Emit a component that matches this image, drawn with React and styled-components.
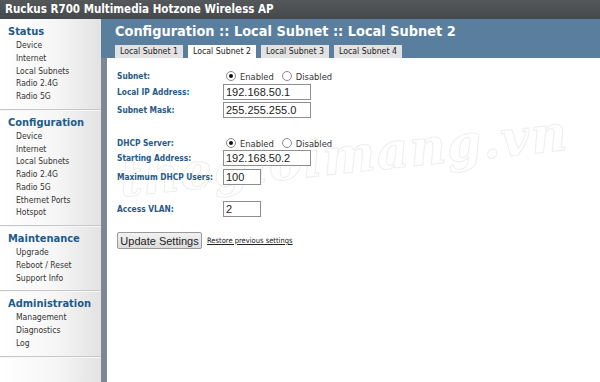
import React from "react";
import styled, { createGlobalStyle } from "styled-components";

const Global = createGlobalStyle`
  html, body { margin: 0; padding: 0; background: #fff; }
  #root { height: 382px; }
`;

const Page = styled.div`
  width: 600px;
  height: 382px;
  display: flex;
  flex-direction: column;
  font-family: "DejaVu Sans Condensed", "DejaVu Sans", Verdana, sans-serif;
  overflow: hidden;
  position: relative;
`;

const TopBar = styled.div`
  height: 19px;
  background: linear-gradient(#55585a, #46494b);
  color: #fff;
  font-weight: bold;
  font-size: 11.5px;
  line-height: 19px;
  padding-left: 5px;
  white-space: nowrap;
`;

const Body = styled.div`
  flex: 1;
  display: flex;
`;

const Sidebar = styled.div`
  width: 101px;
  background: linear-gradient(to right, #ffffff 0%, #f6f6f6 55%, #e2e2e2 100%);
  padding-top: 6px;
`;

const Section = styled.div`
  border-bottom: 1px solid #c8c8c8;
  box-shadow: 0 1px 0 #f6f6f6;
  padding: 0 0 6px 0;
  margin-bottom: 6px;
`;

const SectionTitle = styled.div`
  font-weight: bold;
  font-size: 11px;
  color: #1d5b8a;
  padding-left: 8px;
  line-height: 14px;
`;

const NavItem = styled.div`
  font-size: 8.5px;
  color: #333;
  padding-left: 16px;
  line-height: 12.75px;
`;

const Main = styled.div`
  flex: 1;
  display: flex;
  flex-direction: column;
`;

const Header = styled.div`
  background: #5a7e9d;
  height: 39px;
  padding-left: 14px;
  display: flex;
  flex-direction: column;
  justify-content: flex-end;
`;

const Title = styled.div`
  font-weight: bold;
  font-size: 14.4px;
  color: #fff;
  line-height: 20px;
  margin-bottom: 4px;
  white-space: nowrap;
`;

const Tabs = styled.div`
  display: flex;
  gap: 5px;
`;

const Tab = styled.div`
  width: 68px;
  height: 13px;
  background: ${({ active }) => (active ? "#fff" : "#e2e2e2")};
  font-size: 8.7px;
  line-height: 13px;
  color: #222;
  text-align: center;
  white-space: nowrap;
`;

const Content = styled.div`
  flex: 1;
  border-left: 6px solid #7c8995;
  padding: 11px 0 0 10px;
  position: relative;
  z-index: 1;
`;

const Row = styled.div`
  display: flex;
  align-items: center;
  height: ${({ h }) => h || 16}px;
  margin-top: ${({ gap }) => gap || 0}px;
`;

const Label = styled.div`
  width: 106px;
  font-weight: bold;
  font-size: 8.3px;
  color: #285a86;
`;

const TextInput = styled.input`
  width: ${({ w }) => w || 88}px;
  height: 16px;
  box-sizing: border-box;
  border: 1px solid #8e8e8e;
  padding: 0 2px;
  font-family: "Liberation Sans", Arial, sans-serif;
  font-size: 11px;
  color: #222;
  margin: 0;
  background: #fff;
`;

const RadioGroup = styled.label`
  display: flex;
  align-items: center;
  font-size: 9.3px;
  color: #333;
  margin-left: ${({ first }) => (first ? 3 : 8)}px;
`;

const Radio = styled.input`
  appearance: none;
  width: 10px;
  height: 10px;
  margin: 0 4px 0 0;
  border: 1px solid #8a8a8a;
  border-radius: 50%;
  background: #fff;
  box-sizing: border-box;
  position: relative;
  &:checked::after {
    content: "";
    position: absolute;
    left: 2px;
    top: 2px;
    width: 4px;
    height: 4px;
    border-radius: 50%;
    background: #111;
  }
`;

const Actions = styled.div`
  display: flex;
  align-items: center;
  gap: 5px;
  margin-top: 15px;
`;

const Button = styled.button`
  width: 85px;
  height: 17px;
  padding: 0;
  border: 1px solid #9a9a9a;
  border-radius: 2px;
  background: linear-gradient(#f2f2f2, #dcdcdc);
  font-family: "Liberation Sans", Arial, sans-serif;
  font-size: 11px;
  color: #222;
`;

const RestoreLink = styled.a`
  font-size: 7.5px;
  color: #222;
  text-decoration: underline;
`;

const Watermark = styled.div`
  position: absolute;
  left: 116px;
  top: 150px;
  font-family: "DejaVu Serif", "Liberation Serif", serif;
  font-style: italic;
  font-weight: bold;
  font-size: 50px;
  letter-spacing: 1px;
  color: transparent;
  -webkit-text-stroke: 1px #eeeeee;
  transform: rotate(-6deg);
  transform-origin: left top;
  pointer-events: none;
  white-space: nowrap;
  z-index: 0;
`;

const nav = [
  { title: "Status", items: ["Device", "Internet", "Local Subnets", "Radio 2.4G", "Radio 5G"] },
  {
    title: "Configuration",
    items: ["Device", "Internet", "Local Subnets", "Radio 2.4G", "Radio 5G", "Ethernet Ports", "Hotspot"],
  },
  { title: "Maintenance", items: ["Upgrade", "Reboot / Reset", "Support Info"] },
  { title: "Administration", items: ["Management", "Diagnostics", "Log"] },
];

const RadioPair = ({ name }) => (
  <>
    <RadioGroup first>
      <Radio type="radio" name={name} defaultChecked />
      Enabled
    </RadioGroup>
    <RadioGroup>
      <Radio type="radio" name={name} />
      Disabled
    </RadioGroup>
  </>
);

export default function App() {
  return (
    <Page>
      <Global />
      <TopBar>Ruckus R700 Multimedia Hotzone Wireless AP</TopBar>
      <Body>
        <Sidebar>
          {nav.map((s) => (
            <Section key={s.title}>
              <SectionTitle>{s.title}</SectionTitle>
              {s.items.map((i) => (
                <NavItem key={i}>{i}</NavItem>
              ))}
            </Section>
          ))}
        </Sidebar>
        <Main>
          <Header>
            <Title>Configuration :: Local Subnet :: Local Subnet 2</Title>
            <Tabs>
              <Tab>Local Subnet 1</Tab>
              <Tab active>Local Subnet 2</Tab>
              <Tab>Local Subnet 3</Tab>
              <Tab>Local Subnet 4</Tab>
            </Tabs>
          </Header>
          <Content>
            <Row h={14}>
              <Label>Subnet:</Label>
              <RadioPair name="subnet" />
            </Row>
            <Row gap={1}>
              <Label>Local IP Address:</Label>
              <TextInput defaultValue="192.168.50.1" />
            </Row>
            <Row gap={2}>
              <Label>Subnet Mask:</Label>
              <TextInput defaultValue="255.255.255.0" />
            </Row>
            <Row h={14} gap={18}>
              <Label>DHCP Server:</Label>
              <RadioPair name="dhcp" />
            </Row>
            <Row>
              <Label>Starting Address:</Label>
              <TextInput defaultValue="192.168.50.2" />
            </Row>
            <Row gap={3}>
              <Label>Maximum DHCP Users:</Label>
              <TextInput w={38} defaultValue="100" />
            </Row>
            <Row gap={16}>
              <Label>Access VLAN:</Label>
              <TextInput w={38} defaultValue="2" />
            </Row>
            <Actions>
              <Button>Update Settings</Button>
              <RestoreLink href="#">Restore previous settings</RestoreLink>
            </Actions>
          </Content>
        </Main>
      </Body>
      <Watermark>thegioimang.vn</Watermark>
    </Page>
  );
}
